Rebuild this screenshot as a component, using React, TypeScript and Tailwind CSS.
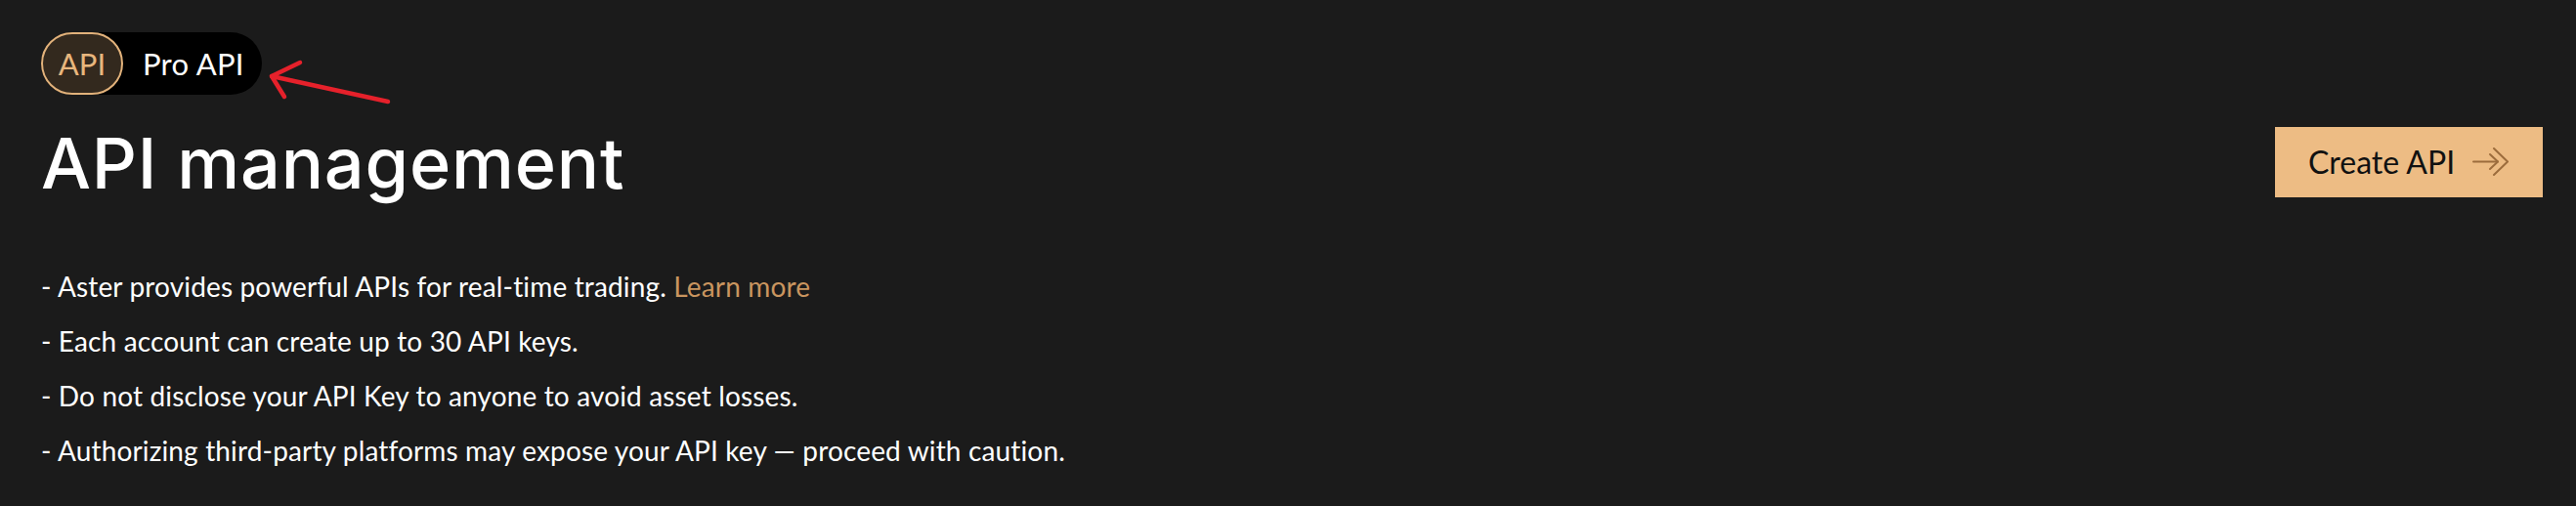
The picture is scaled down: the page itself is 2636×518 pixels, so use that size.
import React from "react";

const lines: React.ReactNode[] = [
  <>
    - Aster provides powerful APIs for real-time trading.{" "}
    <a className="text-[#c9955f]">Learn more</a>
  </>,
  <>- Each account can create up to 30 API keys.</>,
  <>- Do not disclose your API Key to anyone to avoid asset losses.</>,
  <>- Authorizing third-party platforms may expose your API key — proceed with caution.</>,
];

export default function App() {
  return (
    <div
      className="relative w-full h-[518px] bg-[#1b1b1b] text-white pl-[42px] pr-[34px] pt-[33px]"
      style={{ fontFamily: "Lato, 'Noto Sans', sans-serif" }}
    >
      {/* toggle */}
      <div className="flex w-[226px] h-[64px] items-center rounded-full bg-black">
        <div className="flex h-[64px] w-[84px] items-center justify-center rounded-full border-2 border-[#e2b27b] bg-[#33291e] text-[31px] text-[#e8b67d]">
          API
        </div>
        <div className="pl-[20px] text-[31px] tracking-[0.3px] text-white">Pro API</div>
      </div>

      {/* heading row */}
      <div className="mt-[34px] flex items-center justify-between">
        <h1
          className="text-[72px] leading-[72px] font-medium tracking-[0.8px]"
          style={{ fontFamily: "Inter, Lato, sans-serif" }}
        >
          API management
        </h1>
        <button className="flex h-[72px] w-[274px] items-center bg-[#edbc84] pl-[34px] text-[32px] text-[#111] mt-[-2px]">
          <span>Create API</span>
          <svg
            className="ml-[18px]"
            width="38"
            height="30"
            viewBox="0 0 38 30"
            fill="none"
            stroke="#9c6c3c"
            strokeWidth="2"
            strokeLinecap="round"
            strokeLinejoin="round"
          >
            <path d="M1 14.5H26" />
            <path d="M18 7L26 14.5L18 22" />
            <path d="M22 1L36 14.5L22 28" />
          </svg>
        </button>
      </div>

      {/* bullet list */}
      <div className="mt-[62px] flex flex-col">
        {lines.map((l, i) => (
          <p key={i} className="text-[28px] leading-[56px] tracking-[0.15px] text-white">
            {l}
          </p>
        ))}
      </div>

      {/* red annotation arrow */}
      <svg
        className="absolute left-[270px] top-[55px]"
        width="140"
        height="60"
        viewBox="270 55 140 60"
        fill="none"
        stroke="#e6212b"
        strokeWidth="4.5"
        strokeLinecap="round"
        strokeLinejoin="round"
      >
        <path d="M278 78L397 104" />
        <path d="M307 64L278 78L291 99" />
      </svg>
    </div>
  );
}
